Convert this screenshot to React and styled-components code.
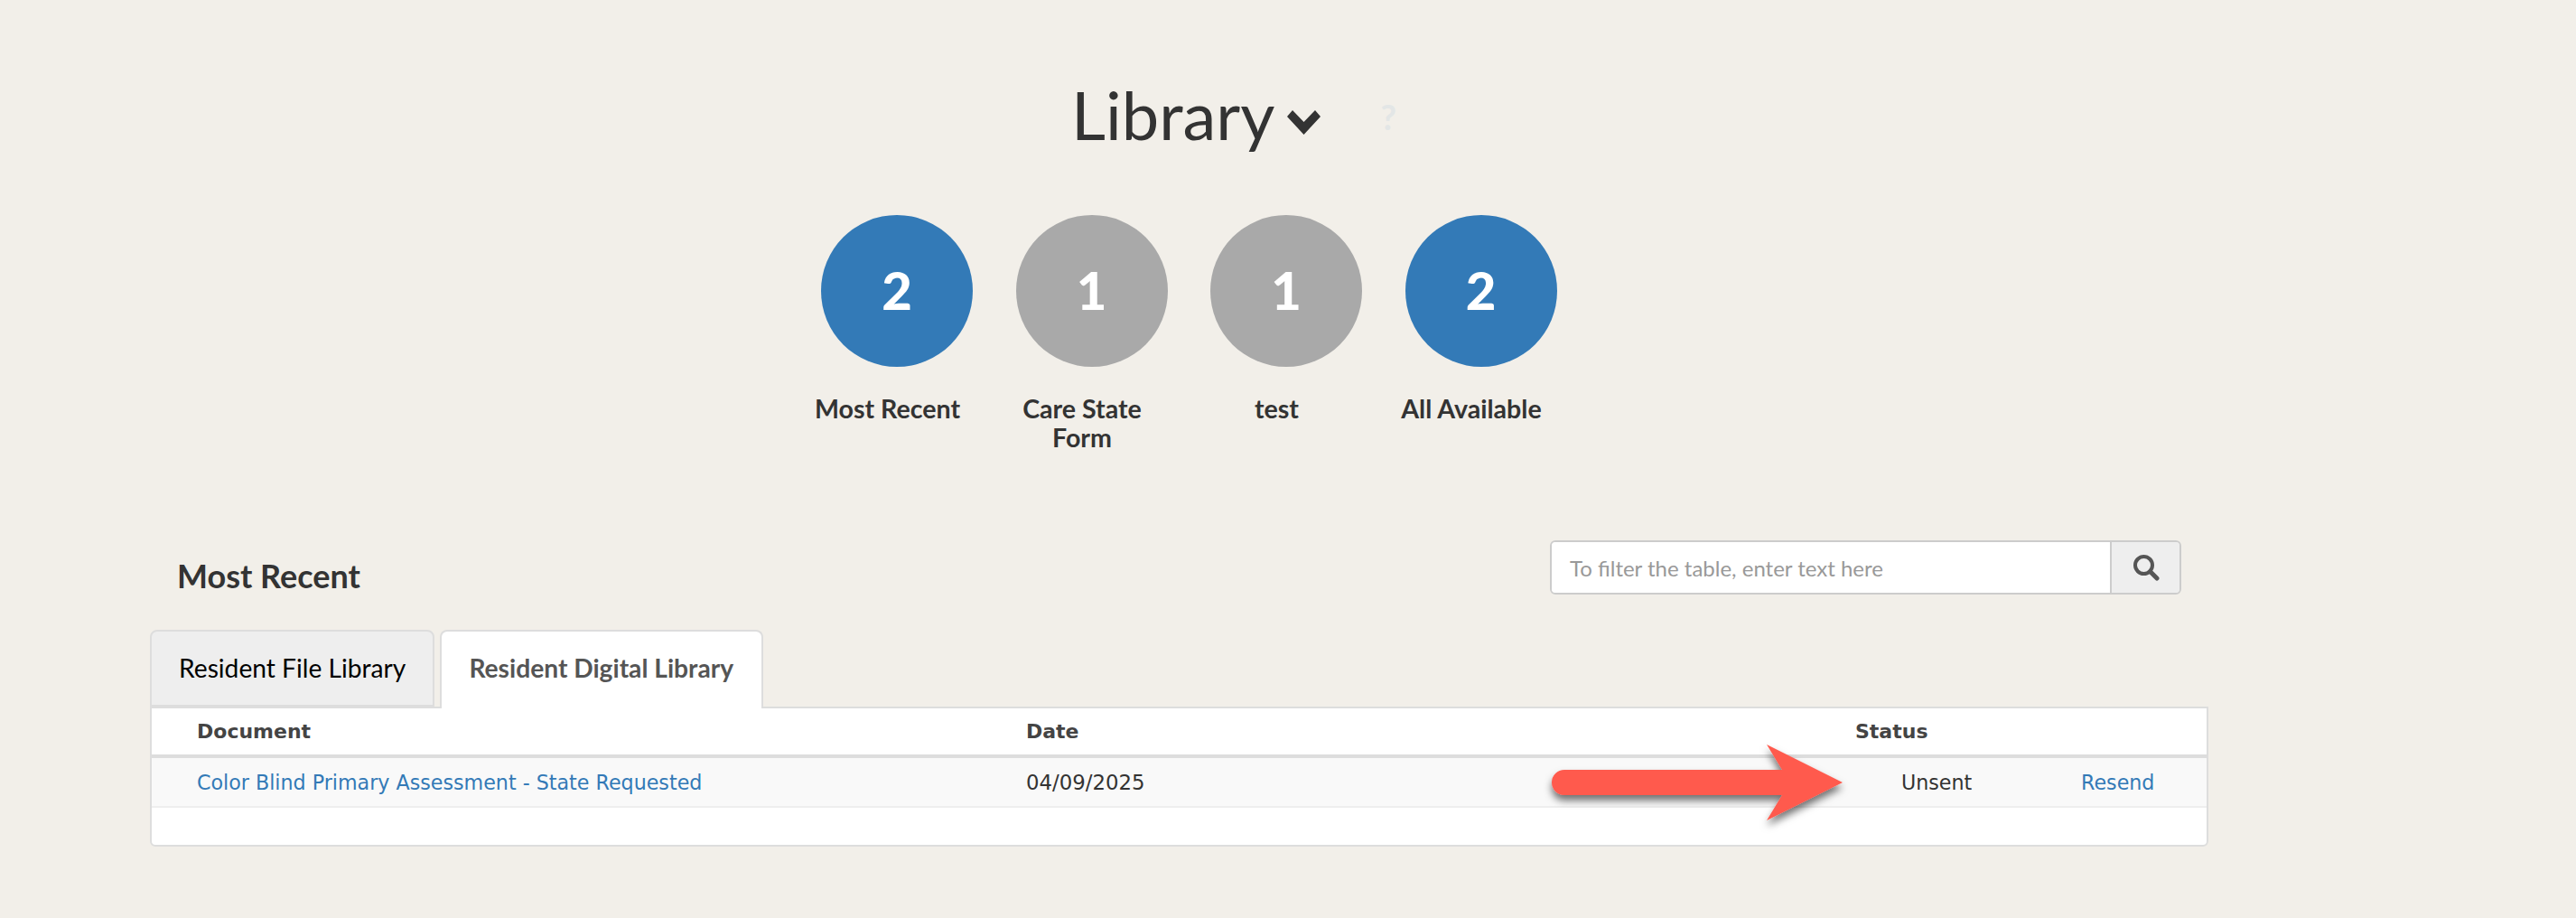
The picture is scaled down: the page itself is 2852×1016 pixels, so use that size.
import React from 'react'
import styled, { createGlobalStyle } from 'styled-components'

const GlobalStyle = createGlobalStyle`
  html, body {
    margin: 0;
    padding: 0;
    background: #f2efe9;
    font-family: Lato, "Liberation Sans", sans-serif;
    color: #333;
  }
`

const Page = styled.div`
  position: relative;
  width: 2852px;
  height: 1016px;
  overflow: hidden;
  box-sizing: border-box;
  padding: 69px 0 0 166px;
`

const TitleRow = styled.div`
  display: flex;
  align-items: center;
  height: 116px;
  padding-left: 1020px;
`

const Title = styled.h1`
  margin: 0;
  font-size: 74px;
  line-height: 116px;
  font-weight: 400;
  color: #333;
`

const Chevron = styled.svg`
  width: 37px;
  height: 27px;
  margin: 16px 0 0 14px;
  fill: #333;
`

const Help = styled.span`
  margin: 4px 0 0 66px;
  font-size: 38px;
  font-weight: 700;
  color: #e3e6e6;
`

const Shortcuts = styled.div`
  display: flex;
  margin-top: 53px;
  padding-left: 725px;
`

const Shortcut = styled.div`
  width: 215.5px;
  display: flex;
  flex-direction: column;
`

const Circle = styled.div`
  width: 168px;
  height: 168px;
  box-sizing: border-box;
  padding-bottom: 3px;
  margin-left: 18px;
  border-radius: 50%;
  background: ${p => (p.$active ? '#337ab7' : '#a9a9a9')};
  color: #fff;
  display: flex;
  align-items: center;
  justify-content: center;
  font-size: 58px;
  font-weight: 900;
`

const Label = styled.div`
  width: 183px;
  margin-top: 30px;
  text-align: center;
  font-size: 28.6px;
  line-height: 32px;
  font-weight: 700;
  color: #333;
`

const Toolbar = styled.div`
  display: flex;
  align-items: center;
  justify-content: space-between;
  height: 62px;
  margin-top: 97px;
  padding-left: 30px;
  width: 2249px;
  box-sizing: border-box;
`

const SectionTitle = styled.h2`
  margin: 18px 0 0;
  font-size: 36px;
  font-weight: 700;
  color: #333;
`

const SearchBox = styled.div`
  display: flex;
  width: 699px;
  height: 60px;
  box-sizing: border-box;
  border: 2px solid #ccc;
  border-radius: 6px;
  overflow: hidden;
`

const SearchInput = styled.div`
  flex: 1;
  background: #fff;
  padding-left: 20px;
  font-size: 24px;
  line-height: 57px;
  color: #999;
`

const SearchButton = styled.div`
  width: 75px;
  background: #eee;
  border-left: 2px solid #ccc;
  display: flex;
  align-items: center;
  justify-content: center;
`

const Tabs = styled.div`
  display: flex;
  gap: 6px;
  margin-top: 38px;
  position: relative;
  z-index: 1;
`

const Tab = styled.div`
  height: ${p => (p.$active ? '87px' : '85px')};
  margin-bottom: ${p => (p.$active ? '-2px' : '0')};
  box-sizing: border-box;
  padding: 0 ${p => (p.$active ? '31px' : '30px')} 0 30px;
  border: 2px solid #ddd;
  border-bottom: ${p => (p.$active ? 'none' : '2px solid #ddd')};
  border-radius: 8px 8px 0 0;
  background: ${p => (p.$active ? '#fff' : '#eee')};
  color: ${p => (p.$active ? '#555' : '#000')};
  font-size: 28.2px;
  line-height: 80px;
  font-weight: ${p => (p.$active ? 700 : 400)};
`

const Table = styled.div`
  width: 2279px;
  height: 155px;
  box-sizing: border-box;
  border: 2px solid #ddd;
  border-radius: 0 0 6px 6px;
  background: #fff;
  font-family: "DejaVu Sans", sans-serif;
`

const Row = styled.div`
  display: grid;
  grid-template-columns: 918px 918px 250px 1fr;
  height: ${p => (p.$head ? '51px' : '53px')};
  padding-left: 50px;
  align-items: center;
  background: ${p => (p.$head ? '#fff' : '#f9f9f9')};
  border-bottom: ${p => (p.$head ? '4px solid #ddd' : '2px solid #eee')};
`

const HeadCell = styled.div`
  font-size: 22px;
  font-weight: 700;
  color: #444;
`

const Cell = styled.div`
  font-size: ${p => (p.$indent ? '22.2px' : '22.8px')};
  color: #333;
  padding-left: ${p => (p.$indent ? '51px' : '0')};
`

const DocLink = styled.a`
  font-size: 22.2px;
  color: #337ab7;
  text-decoration: none;
`

const Arrow = styled.svg`
  position: absolute;
  left: 1700px;
  top: 810px;
  width: 360px;
  height: 120px;
`

const counts = [
  { label: 'Most Recent', n: 2, active: true },
  { label: 'Care State Form', n: 1 },
  { label: 'test', n: 1 },
  { label: 'All Available', n: 2, active: true },
]

export default function App() {
  return (
    <Page>
      <GlobalStyle />
      <TitleRow>
        <Title>Library</Title>
        <Chevron viewBox="0 0 37 27">
          <path d="M6 0 18.5 13 31 0 37 7 18.5 27 0 7Z" />
        </Chevron>
        <Help>?</Help>
      </TitleRow>
      <Shortcuts>
        {counts.map(c => (
          <Shortcut key={c.label}>
            <Circle $active={c.active}>{c.n}</Circle>
            <Label>{c.label}</Label>
          </Shortcut>
        ))}
      </Shortcuts>
      <Toolbar>
        <SectionTitle>Most Recent</SectionTitle>
        <SearchBox>
          <SearchInput>To filter the table, enter text here</SearchInput>
          <SearchButton>
            <svg width="30" height="30" viewBox="0 0 30 30" fill="none" stroke="#555">
              <circle cx="12.5" cy="12.5" r="9.5" strokeWidth="4" />
              <path d="M19.5 19.5 27 27" strokeWidth="5" strokeLinecap="round" />
            </svg>
          </SearchButton>
        </SearchBox>
      </Toolbar>
      <Tabs>
        <Tab>Resident File Library</Tab>
        <Tab $active>Resident Digital Library</Tab>
      </Tabs>
      <Table>
        <Row $head>
          <HeadCell>Document</HeadCell>
          <HeadCell>Date</HeadCell>
          <HeadCell>Status</HeadCell>
        </Row>
        <Row>
          <DocLink href="#">Color Blind Primary Assessment - State Requested</DocLink>
          <Cell>04/09/2025</Cell>
          <Cell $indent>Unsent</Cell>
          <DocLink href="#">Resend</DocLink>
        </Row>
      </Table>
      <Arrow viewBox="0 0 360 120">
        <defs>
          <filter id="arrowShadow" x="-10%" y="-20%" width="120%" height="150%">
            <feDropShadow dx="0" dy="6" stdDeviation="4" floodColor="#000" floodOpacity="0.55" />
          </filter>
        </defs>
        <path
          filter="url(#arrowShadow)"
          fill="#ff5a4d"
          d="M32 42H273L256 14 340 56 256 98 273 70H32A14 14 0 0 1 18 56 14 14 0 0 1 32 42Z"
        />
      </Arrow>
    </Page>
  )
}
